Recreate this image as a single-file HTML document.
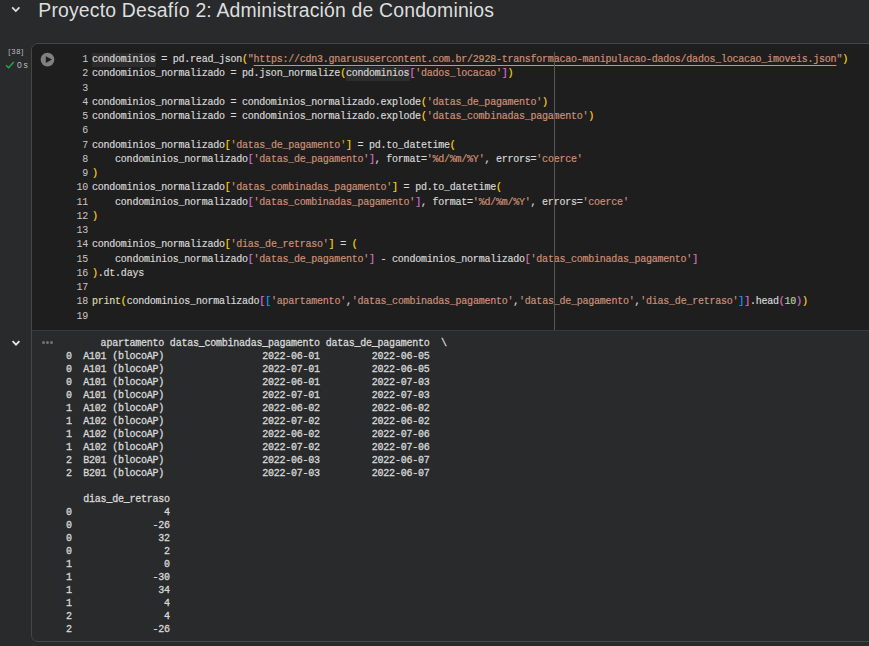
<!DOCTYPE html>
<html><head><meta charset="utf-8">
<style>
html,body{margin:0;padding:0;}
body{width:869px;height:646px;overflow:hidden;background:#282a2c;position:relative;font-family:"Liberation Sans",sans-serif;}
.abs{position:absolute;}
#title{left:38.3px;top:-2.5px;font-size:19.4px;line-height:24px;color:#dedede;white-space:nowrap;letter-spacing:0.175px;}
#cell{left:31px;top:43px;width:860px;height:597px;border:1px solid #444746;border-radius:7px;box-sizing:content-box;}
#code{left:32px;top:44px;width:837px;height:286px;background:#1e1e1e;border-top-left-radius:6px;}
#sep{left:32px;top:330px;width:837px;height:1px;background:#383b3d;}
.mono{font-family:"Liberation Mono",monospace;font-size:10px;letter-spacing:-0.231px;white-space:pre;}
#lines{left:0;top:0;}
.ln{position:absolute;left:60px;width:28px;text-align:right;color:#c8c8c8;height:14.25px;line-height:14.25px;}
.cl{position:absolute;left:92px;color:#d8d8d8;-webkit-text-stroke:0.18px currentColor;height:14.25px;line-height:14.25px;}
.s{color:#ce9178}.n{color:#b5cea8}.f{color:#dcdcaa}.b1{color:#ffd700}.b2{color:#da70d6}.b3{color:#179fff}.k{color:#c586c0}
.u{text-decoration:underline;text-decoration-thickness:1px;text-underline-offset:2.6px;}
.hl{position:absolute;background:#2c2c2c;height:13.6px;}
#ruler{left:554px;top:52px;width:1px;height:278px;background:#585858;z-index:5;}
#out{left:66px;top:337px;color:#d8d8d8;line-height:13px;-webkit-text-stroke:0.3px #d8d8d8;}
#exec{left:8.2px;top:46.9px;font-size:7.6px;color:#bdbdbd;letter-spacing:0.85px;}
#time{left:17px;top:59.8px;font-size:8.6px;color:#bdbdbd;word-spacing:-0.6px;}
</style></head><body>
<svg class="abs" style="left:10px;top:4px" width="12" height="12" viewBox="0 0 12 12"><path d="M2.2 3.3 L5.8 7.1 L9.4 3.3" fill="none" stroke="#e0e0e0" stroke-width="1.7"/></svg>
<div id="title" class="abs">Proyecto Desafío 2: Administración de Condominios</div>
<div id="cell" class="abs"></div>
<div id="code" class="abs"></div>
<div id="sep" class="abs"></div>
<div id="ruler" class="abs"></div>
<div id="exec" class="abs">[38]</div>
<svg class="abs" style="left:5px;top:61px" width="10" height="8" viewBox="0 0 10 8"><path d="M1 4.2 L3.6 6.8 L8.8 1" fill="none" stroke="#2ea84a" stroke-width="1.3"/></svg>
<div id="time" class="abs">0 s</div>
<svg class="abs" style="left:39px;top:51px" width="18" height="18" viewBox="0 0 18 18"><g transform="translate(0.52 0.6)"><circle cx="8" cy="8" r="6.85" fill="#808080"/><path d="M6.3 4.7 L12.4 8 L6.3 11.3 Z" fill="#1e1e1e"/></g></svg>
<div class="hl" style="left:92px;top:53.1px;width:63.6px"></div><div class="hl" style="left:345.9px;top:67.3px;width:63.8px"></div>
<div id="lines" class="abs mono">
<div class="ln" style="top:53.10px">1</div><div class="cl" style="top:53.10px">condominios = pd.read_json<span class="b1">(</span><span class="s">"<span class="u">https://cdn3.gnarususercontent.com.br/2928-transformacao-manipulacao-dados/dados_locacao_imoveis.json</span>"</span><span class="b1">)</span></div>
<div class="ln" style="top:67.35px">2</div><div class="cl" style="top:67.35px">condominios_normalizado = pd.json_normalize<span class="b1">(</span>condominios<span class="b2">[</span><span class="s">'dados_locacao'</span><span class="b2">]</span><span class="b1">)</span></div>
<div class="ln" style="top:81.60px">3</div><div class="cl" style="top:81.60px"></div>
<div class="ln" style="top:95.85px">4</div><div class="cl" style="top:95.85px">condominios_normalizado = condominios_normalizado.explode<span class="b1">(</span><span class="s">'datas_de_pagamento'</span><span class="b1">)</span></div>
<div class="ln" style="top:110.10px">5</div><div class="cl" style="top:110.10px">condominios_normalizado = condominios_normalizado.explode<span class="b1">(</span><span class="s">'datas_combinadas_pagamento'</span><span class="b1">)</span></div>
<div class="ln" style="top:124.35px">6</div><div class="cl" style="top:124.35px"></div>
<div class="ln" style="top:138.60px">7</div><div class="cl" style="top:138.60px">condominios_normalizado<span class="b1">[</span><span class="s">'datas_de_pagamento'</span><span class="b1">]</span> = pd.to_datetime<span class="b1">(</span></div>
<div class="ln" style="top:152.85px">8</div><div class="cl" style="top:152.85px">    condominios_normalizado<span class="b2">[</span><span class="s">'datas_de_pagamento'</span><span class="b2">]</span>, format=<span class="s">'%d/%m/%Y'</span>, errors=<span class="s">'coerce'</span></div>
<div class="ln" style="top:167.10px">9</div><div class="cl" style="top:167.10px"><span class="b1">)</span></div>
<div class="ln" style="top:181.35px">10</div><div class="cl" style="top:181.35px">condominios_normalizado<span class="b1">[</span><span class="s">'datas_combinadas_pagamento'</span><span class="b1">]</span> = pd.to_datetime<span class="b1">(</span></div>
<div class="ln" style="top:195.60px">11</div><div class="cl" style="top:195.60px">    condominios_normalizado<span class="b2">[</span><span class="s">'datas_combinadas_pagamento'</span><span class="b2">]</span>, format=<span class="s">'%d/%m/%Y'</span>, errors=<span class="s">'coerce'</span></div>
<div class="ln" style="top:209.85px">12</div><div class="cl" style="top:209.85px"><span class="b1">)</span></div>
<div class="ln" style="top:224.10px">13</div><div class="cl" style="top:224.10px"></div>
<div class="ln" style="top:238.35px">14</div><div class="cl" style="top:238.35px">condominios_normalizado<span class="b1">[</span><span class="s">'dias_de_retraso'</span><span class="b1">]</span> = <span class="b1">(</span></div>
<div class="ln" style="top:252.60px">15</div><div class="cl" style="top:252.60px">    condominios_normalizado<span class="b2">[</span><span class="s">'datas_de_pagamento'</span><span class="b2">]</span> - condominios_normalizado<span class="b2">[</span><span class="s">'datas_combinadas_pagamento'</span><span class="b2">]</span></div>
<div class="ln" style="top:266.85px">16</div><div class="cl" style="top:266.85px"><span class="b1">)</span>.dt.days</div>
<div class="ln" style="top:281.10px">17</div><div class="cl" style="top:281.10px"></div>
<div class="ln" style="top:295.35px">18</div><div class="cl" style="top:295.35px"><span class="f">print</span><span class="b1">(</span>condominios_normalizado<span class="b2">[</span><span class="b3">[</span><span class="s">'apartamento'</span>,<span class="s">'datas_combinadas_pagamento'</span>,<span class="s">'datas_de_pagamento'</span>,<span class="s">'dias_de_retraso'</span><span class="b3">]</span><span class="b2">]</span>.head<span class="b2">(</span><span class="n">10</span><span class="b2">)</span><span class="b1">)</span></div>
<div class="ln" style="top:309.60px">19</div><div class="cl" style="top:309.60px"></div>
</div>
<svg class="abs" style="left:10px;top:337px" width="12" height="12" viewBox="0 0 12 12"><path d="M2.6 4.1 L6 7.6 L9.4 4.1" fill="none" stroke="#e6e6e6" stroke-width="1.9"/></svg>
<div class="abs" style="left:42px;top:341px;width:12px;height:4px;">
<span class="abs" style="left:0;top:0;width:3.2px;height:3.2px;border-radius:2px;background:#747474"></span>
<span class="abs" style="left:4px;top:0;width:3.2px;height:3.2px;border-radius:2px;background:#747474"></span>
<span class="abs" style="left:8px;top:0;width:3.2px;height:3.2px;border-radius:2px;background:#747474"></span>
</div>
<div id="out" class="abs mono">      apartamento datas_combinadas_pagamento datas_de_pagamento  \
0  A101 (blocoAP)                 2022-06-01         2022-06-05
0  A101 (blocoAP)                 2022-07-01         2022-06-05
0  A101 (blocoAP)                 2022-06-01         2022-07-03
0  A101 (blocoAP)                 2022-07-01         2022-07-03
1  A102 (blocoAP)                 2022-06-02         2022-06-02
1  A102 (blocoAP)                 2022-07-02         2022-06-02
1  A102 (blocoAP)                 2022-06-02         2022-07-06
1  A102 (blocoAP)                 2022-07-02         2022-07-06
2  B201 (blocoAP)                 2022-06-03         2022-06-07
2  B201 (blocoAP)                 2022-07-03         2022-06-07

   dias_de_retraso
0                4
0              -26
0               32
0                2
1                0
1              -30
1               34
1                4
2                4
2              -26</div>
</body></html>
